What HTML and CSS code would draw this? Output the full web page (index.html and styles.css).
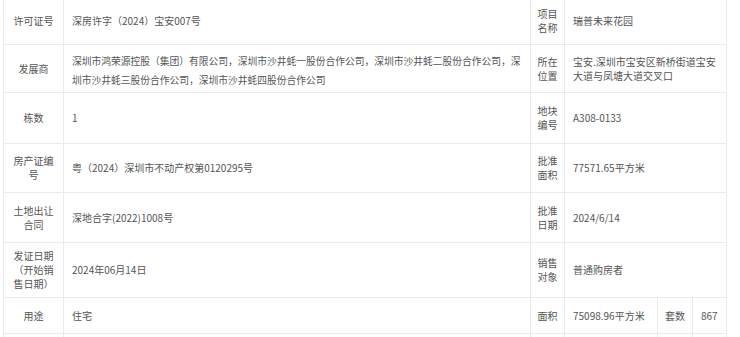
FILE: index.html
```html
<!DOCTYPE html>
<html lang="zh-CN">
<head>
    <meta charset="UTF-8">
    <title>项目信息</title>
    <link rel="stylesheet" href="styles.css">
</head>
<body>
    <div class="wrap">
        <table class="info">
            <colgroup>
                <col class="c-label">
                <col class="c-value">
                <col class="c-label2">
                <col class="c-value2">
                <col class="c-label3">
                <col class="c-value3">
            </colgroup>
            <tr class="r48">
                <th>许可证号</th>
                <td>深房许字（2024）宝安007号</td>
                <th class="side">项目<br>名称</th>
                <td colspan="3">瑞普未来花园</td>
            </tr>
            <tr class="r48">
                <th>发展商</th>
                <td class="long">深圳市鸿荣源控股（集团）有限公司，深圳市沙井蚝一股份合作公司，深圳市沙井蚝二股份合作公司，深圳市沙井蚝三股份合作公司，深圳市沙井蚝四股份合作公司</td>
                <th class="side">所在<br>位置</th>
                <td colspan="3">宝安.深圳市宝安区新桥街道宝安大道与凤塘大道交叉口</td>
            </tr>
            <tr class="r51">
                <th>栋数</th>
                <td>1</td>
                <th class="side">地块<br>编号</th>
                <td colspan="3">A308-0133</td>
            </tr>
            <tr class="r49">
                <th>房产证编号</th>
                <td>粤（2024）深圳市不动产权第0120295号</td>
                <th class="side">批准<br>面积</th>
                <td colspan="3">77571.65平方米</td>
            </tr>
            <tr class="r50">
                <th>土地出让合同</th>
                <td>深地合字(2022)1008号</td>
                <th class="side">批准<br>日期</th>
                <td colspan="3">2024/6/14</td>
            </tr>
            <tr class="r55">
                <th>发证日期（开始销售日期）</th>
                <td>2024年06月14日</td>
                <th class="side">销售<br>对象</th>
                <td colspan="3">普通购房者</td>
            </tr>
            <tr class="r36">
                <th>用途</th>
                <td>住宅</td>
                <th class="side">面积</th>
                <td>75098.96平方米</td>
                <th class="side">套数</th>
                <td>867</td>
            </tr>
            <tr class="r36">
                <th></th>
                <td></td>
                <th class="side"></th>
                <td></td>
                <th class="side"></th>
                <td></td>
            </tr>
        </table>
    </div>
</body>
</html>
```

FILE: styles.css
```css
body { margin: 0; background: #fff; font-family: "Microsoft YaHei", "Noto Sans CJK SC", sans-serif; font-size: 10px; color: #555; }
.wrap { padding-left: 3px; margin-top: -4px; }
.info { border-collapse: collapse; table-layout: fixed; width: 724px; }
.info th, .info td { border: 1px solid #ebebeb; vertical-align: middle; font-weight: normal; line-height: 14px; overflow: hidden; }
.info th { text-align: center; padding: 0 8px; color: #555; }
.info th.side { padding: 0 4px; }
.info td { padding: 0 8px; color: #555; }
.info td.long { font-size: 9.75px; line-height: 19px; padding-right: 4px; padding-top: 4px; }
.c-label { width: 60px; }
.c-value { width: 467px; }
.c-label2 { width: 34px; }
.c-value2 { width: 93px; }
.c-label3 { width: 35px; }
.c-value3 { width: 34px; }
.r48 { height: 48px; }
.r49 { height: 49px; }
.r50 { height: 50px; }
.r51 { height: 51px; }
.r55 { height: 55px; }
.r36 { height: 36px; }
```
